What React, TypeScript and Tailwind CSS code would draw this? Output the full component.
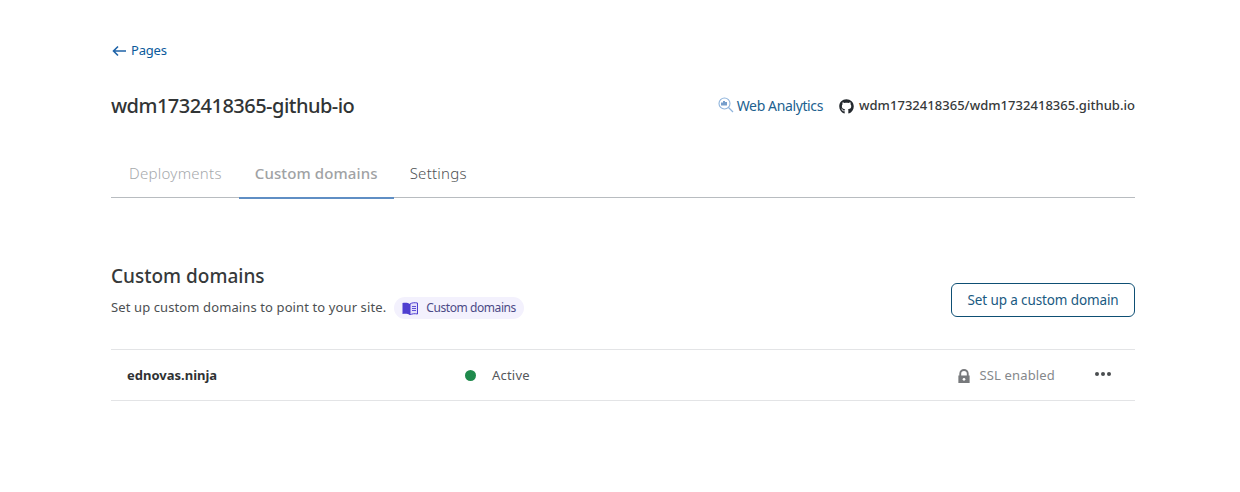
import { FaGithub } from "react-icons/fa";

const font = "font-['Noto_Sans','Open_Sans',sans-serif]";

export default function App() {
  return (
    <div className={`w-[1240px] h-[492px] bg-white overflow-hidden pl-[111px] pr-[105px] pt-[42px] text-[#36393a] ${font}`}>
      <a className="flex items-center gap-[4px] h-[18px] text-[13px] text-[#0b5a9b]">
        <svg width="16" height="12" viewBox="0 0 16 12" fill="none" stroke="#1f63a8" strokeWidth="1.6">
          <path d="M15 6H3M7 1.5 2.5 6 7 10.5" />
        </svg>
        <span className="tracking-[-0.2px]">Pages</span>
      </a>

      <div className="flex items-center justify-between mt-[32px] h-[28px]">
        <h1 className="text-[20px] font-medium tracking-[-0.52px] text-[#313435]">wdm1732418365-github-io</h1>
        <div className="flex items-center gap-[16px]">
          <a className="flex items-center gap-[3px] text-[14px] tracking-[-0.38px] text-[#21618f] -mt-[2px]">
            <svg width="16" height="16" viewBox="0 0 16 16" fill="none">
              <circle cx="6.5" cy="6.5" r="5.5" stroke="#8fb4dc" strokeWidth="1.1" />
              <path d="M10.5 10.5 15 15" stroke="#8fb4dc" strokeWidth="1.3" />
              <path d="M4 5.5v3M6 4v4.5M8 5v3.5" stroke="#2f6bb0" strokeWidth="1.3" />
            </svg>
            Web Analytics
          </a>
          <a className="flex items-center gap-[5px] text-[13px] font-medium tracking-[0.03px] text-[#36393a]">
            <FaGithub className="w-[15px] h-[15px] text-[#24292e]" />
            wdm1732418365/wdm1732418365.github.io
          </a>
        </div>
      </div>

      <div className="flex mt-[33px] h-[45px] border-b border-[#b8bcc0] text-[15px]">
        <div className="pl-[18px] pr-[17px] pt-[9px] text-[#a6a9ac] font-light tracking-[0.27px]">Deployments</div>
        <div className="px-[16px] pt-[9px] -mb-px h-[46px] font-medium text-[#a0a2a4] tracking-[0.12px] border-b-2 border-[#5f8ec4]">Custom domains</div>
        <div className="px-[16px] pt-[9px] text-[#4f5255] font-light tracking-[0.25px]">Settings</div>
      </div>

      <div className="flex items-end justify-between mt-[64px] h-[56px]">
        <div className="self-start">
          <h2 className="text-[19px] leading-[28px] font-medium text-[#36393a]">Custom domains</h2>
          <div className="flex items-center mt-[7px] h-[22px]">
            <span className="text-[13px] tracking-[0.11px] text-[#4c4f52]">Set up custom domains to point to your site.</span>
            <span className="flex items-center gap-[8px] ml-[8px] h-[22px] px-[8px] rounded-full bg-[#f3f1fd] text-[12px] tracking-[-0.42px] text-[#4b4a86]">
              <svg width="16" height="13" viewBox="0 0 16 13">
                <path d="M0.5 1C3 0.5 6 0.5 8 2V13C6 11.5 3 11.5 0.5 12Z" fill="#4f3fd0" />
                <path d="M8 2C10 0.5 13 0.5 15.5 1V12C13 11.5 10 11.5 8 13Z" fill="#e3dffa" stroke="#4f3fd0" />
                <path d="M10 4.5h4M10 6.5h4M10 8.5h4" stroke="#4f3fd0" strokeWidth="0.9" />
              </svg>
              Custom domains
            </span>
          </div>
        </div>
        <button className="h-[34px] w-[184px] mb-[1px] rounded-[6px] border border-[#0e4f74] text-[13.5px] tracking-[-0.12px] text-[#1a5a82]">
          Set up a custom domain
        </button>
      </div>

      <div className="flex items-center mt-[31px] h-[52px] pt-[2px] border-y border-[#e3e4e6]">
        <div className="w-[354px] pl-[16px] text-[13px] font-bold text-[#2f3234]">ednovas.ninja</div>
        <div className="flex items-center gap-[16px] text-[#55585b] text-[13px] tracking-[0.2px]">
          <span className="w-[11px] h-[11px] rounded-full bg-[#1f8a4c] -mt-[1px]" />
          Active
        </div>
        <div className="flex items-center ml-auto gap-[9px] text-[13px] tracking-[0.15px] text-[#85888b]">
          <svg width="14" height="15" viewBox="0 0 14 16" fill="#77797c">
            <path d="M2 7V5a5 5 0 0 1 10 0v2h1v8H1V7Zm2 0h6V5a3 3 0 0 0-6 0Z" />
            <circle cx="7" cy="11" r="1.4" fill="#fff" />
          </svg>
          SSL enabled
        </div>
        <div className="flex items-center gap-[2px] ml-[40px] mr-[24px] -mt-[4px]">
          <span className="w-[4px] h-[4px] rounded-full bg-[#4a4d50]" />
          <span className="w-[4px] h-[4px] rounded-full bg-[#4a4d50]" />
          <span className="w-[4px] h-[4px] rounded-full bg-[#4a4d50]" />
        </div>
      </div>
    </div>
  );
}
